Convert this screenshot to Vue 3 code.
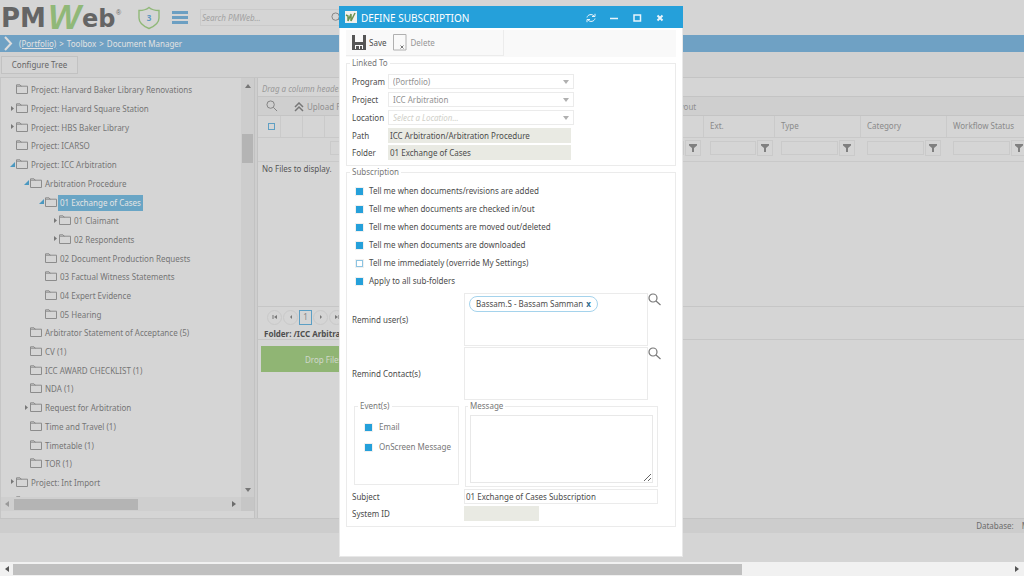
<script setup>
import { ref } from 'vue'

const tree = [
  { level: 0, label: 'Project: Harvard Baker Library Renovations' },
  { level: 0, label: 'Project: Harvard Square Station', state: 'closed' },
  { level: 0, label: 'Project: HBS Baker Library', state: 'closed' },
  { level: 0, label: 'Project: ICARSO' },
  { level: 0, label: 'Project: ICC Arbitration', state: 'open' },
  { level: 1, label: 'Arbitration Procedure', state: 'open' },
  { level: 2, label: '01 Exchange of Cases', state: 'open', selected: true },
  { level: 3, label: '01 Claimant', state: 'closed' },
  { level: 3, label: '02 Respondents', state: 'closed' },
  { level: 2, label: '02 Document Production Requests' },
  { level: 2, label: '03 Factual Witness Statements' },
  { level: 2, label: '04 Expert Evidence' },
  { level: 2, label: '05 Hearing' },
  { level: 1, label: 'Arbitrator Statement of Acceptance (5)' },
  { level: 1, label: 'CV (1)' },
  { level: 1, label: 'ICC AWARD CHECKLIST (1)' },
  { level: 1, label: 'NDA (1)' },
  { level: 1, label: 'Request for Arbitration', state: 'closed' },
  { level: 1, label: 'Time and Travel (1)' },
  { level: 1, label: 'Timetable (1)' },
  { level: 1, label: 'TOR (1)' },
  { level: 0, label: 'Project: Int Import', state: 'closed' },
  { level: 0, label: '' },
]

const columns = ['', 'Ext.', 'Type', 'Category', 'Workflow Status']

const lookups = [
  { id: 'program', label: 'Program', value: '(Portfolio)' },
  { id: 'project', label: 'Project', value: 'ICC Arbitration' },
  { id: 'location', label: 'Location', value: 'Select a Location...', empty: true },
]

const options = ref([
  { label: 'Tell me when documents/revisions are added', on: true },
  { label: 'Tell me when documents are checked in/out', on: true },
  { label: 'Tell me when documents are moved out/deleted', on: true },
  { label: 'Tell me when documents are downloaded', on: true },
  { label: 'Tell me immediately (override My Settings)', on: false },
  { label: 'Apply to all sub-folders', on: true },
])

const events = ref([
  { label: 'Email', on: true },
  { label: 'OnScreen Message', on: true },
])

const path = ref('ICC Arbitration/Arbitration Procedure')
const folder = ref('01 Exchange of Cases')
const subject = ref('01 Exchange of Cases Subscription')
const message = ref('')
</script>

<template>
  <div class="page">
    <header class="top">
      <svg class="logo" viewBox="0 0 122 35" role="img" aria-label="PMWeb">
        <text x="1" y="27" class="logo-dark">PM</text>
        <text x="82" y="27" class="logo-dark logo-end">eb</text>
        <text x="48" y="29" class="logo-green">W</text>
        <text x="116" y="15" class="logo-reg">®</text>
      </svg>
      <svg class="shield" viewBox="0 0 24 24">
        <path d="M12 1.5C9 4 5.500 4.500 2 4.500V12c0 5.500 5 8.500 10 10.500 5-2 10-5 10-10.500V4.500C18.500 4.500 15 4 12 1.500Z" />
        <text x="12" y="15" text-anchor="middle">3</text>
      </svg>
      <button class="burger" aria-label="Menu"><i></i><i></i><i></i></button>
      <div class="search">
        <input type="text" placeholder="Search PMWeb..." aria-label="Search PMWeb" />
        <svg viewBox="0 0 13 13"><circle cx="5" cy="5" r="4" /><path d="M8 8l4 4" /></svg>
      </div>
    </header>

    <nav class="crumbs">
      <svg viewBox="0 0 10 15"><path d="M1 1l6 6.500-6 6.500" /></svg>
      <a href="#">(Portfolio)</a><span>&gt;</span><span>Toolbox</span><span>&gt;</span><span>Document Manager</span>
    </nav>

    <div class="actions"><button>Configure Tree</button></div>

    <main>
      <aside>
        <div class="tree-wrap">
          <div class="tree-view">
            <ul class="tree">
              <li v-for="(n, i) in tree" :key="i" :class="'l' + n.level">
                <span class="toggle">
                  <svg v-if="n.state === 'closed'" viewBox="0 0 5 7"><path fill="#777" d="M1 1v5l3-2.500z" /></svg>
                  <svg v-if="n.state === 'open'" viewBox="0 0 5 7"><path fill="#4b98c0" d="M5 1v5H0z" /></svg>
                </span>
                <svg class="folder" viewBox="0 0 12 10"><path d="M.5 9.500V.8h3.500l1 1.400h6.500v7.300zM.5 2.200h5" /></svg>
                <span class="node" :class="{ selected: n.selected }">{{ n.label }}</span>
              </li>
            </ul>
          </div>
          <div class="vbar">
            <svg viewBox="0 0 6 4"><path d="M0 4l3-4 3 4z" /></svg>
            <div class="vtrack"><div></div></div>
            <svg viewBox="0 0 6 4"><path d="M0 0l3 4 3-4z" /></svg>
          </div>
        </div>
        <div class="hbar">
          <svg class="pale" viewBox="0 0 4 6"><path d="M4 0L0 3l4 3z" /></svg>
          <div class="htrack"><div></div></div>
          <svg viewBox="0 0 4 6"><path d="M0 0l4 3-4 3z" /></svg>
          <span></span>
        </div>
      </aside>
      <div class="splitter"></div>
      <section class="files">
        <div class="drag">Drag a column header</div>
        <div class="file-tools">
          <svg class="find" viewBox="0 0 13 13"><circle cx="5" cy="5" r="4" /><path d="M8 8l4 4" /></svg>
          <button><svg viewBox="0 0 10 10"><path d="M1 5l4-4 4 4M1 9l4-4 4 4" /></svg>Upload Files</button>
          <button class="layout">Layout</button>
        </div>
        <table>
          <colgroup>
            <col class="c-s" /><col class="c-s" /><col class="c-s" /><col /><col class="c-e" /><col class="c-m" /><col class="c-m" /><col class="c-m" />
          </colgroup>
          <thead>
            <tr>
              <th><input type="checkbox" class="tick dim" aria-label="Select all" /></th>
              <th></th><th></th>
              <th v-for="c in columns" :key="c">{{ c }}</th>
            </tr>
          </thead>
          <tbody>
            <tr>
              <td colspan="3"></td>
              <td v-for="c in columns" :key="c">
                <div class="filter" :class="{ tight: c === 'Ext.' || !c, wide: !c }">
                  <input type="text" :aria-label="'Filter ' + c" />
                  <button aria-label="Filter"><svg viewBox="0 0 8 8"><path d="M0 0h8v1.500L5 4v4H3V4L0 1.500z" /></svg></button>
                </div>
              </td>
            </tr>
          </tbody>
        </table>
        <div class="empty">No Files to display.</div>
        <div class="pager">
          <button aria-label="First"><svg viewBox="0 0 6 6"><path d="M.5 1h1v4h-1zM5 1v4L2 3z" /></svg></button>
          <button aria-label="Previous"><svg viewBox="0 0 6 6"><path d="M4 1v4L2 3z" /></svg></button>
          <button class="current">1</button>
          <button aria-label="Next"><svg viewBox="0 0 6 6"><path d="M2 1v4l2-2z" /></svg></button>
          <button aria-label="Last"><svg viewBox="0 0 6 6"><path d="M4.500 1h1v4h-1zM1 1v4l3-2z" /></svg></button>
        </div>
        <div class="folder-line">Folder: /ICC Arbitration</div>
        <div class="drop">Drop Files Here</div>
      </section>
    </main>

    <footer><span>Database:</span><span>M</span></footer>
    <div class="gap"></div>
    <div class="page-bar">
      <svg viewBox="0 0 4 6"><path d="M4 0L0 3l4 3z" /></svg>
      <div class="page-track"><div></div></div>
      <svg viewBox="0 0 4 6"><path d="M0 0l4 3-4 3z" /></svg>
    </div>

    <div class="dialog" role="dialog" aria-label="Define subscription">
      <div class="title">
        <svg class="app" viewBox="0 0 12 12"><path class="app-bg" d="M0 0h12v12H0z" /><path class="app-line" d="M1 4l2 1v5l3-7v7l4-8" /></svg>
        <h1>DEFINE SUBSCRIPTION</h1>
        <button aria-label="Reload"><svg class="thin" viewBox="0 0 10 10"><path d="M1 4.500C1.500 1.500 6 .5 8 3M9 .8V3.500H6M9 5.500C8.500 8.500 4 9.500 2 7M1 9.200V6.500H4" /></svg></button>
        <button aria-label="Minimize"><svg viewBox="0 0 10 10"><path d="M1 5.500h8" /></svg></button>
        <button aria-label="Maximize"><svg viewBox="0 0 10 10"><path d="M2 2h6.500v6H2z" /></svg></button>
        <button aria-label="Close"><svg viewBox="0 0 10 10"><path class="heavy" d="M2.500 2.500l5 5M7.500 2.500l-5 5" /></svg></button>
      </div>

      <div class="body">
        <div class="bar">
          <div class="bar-in">
            <button>
              <svg viewBox="0 0 14 15"><path fill="#555" d="M0 0h3v7h8V0h3v15H0z" /><path fill="#f9f9f9" d="M3 10h8v4H3z" /><path fill="#555" d="M4 11h3v3H4zM8 11h2v3H8z" /></svg>
              Save
            </button>
            <button disabled>
              <svg class="del" viewBox="0 0 14 17"><path d="M.5 .5h12.500v15.500H.5z" /><path class="cross" d="M7.500 11.500l3 3M10.500 11.500l-3 3" /></svg>
              Delete
            </button>
          </div>
        </div>

        <fieldset class="linked">
          <legend>Linked To</legend>
          <div v-for="l in lookups" :key="l.id" class="row">
            <label :for="l.id">{{ l.label }}</label>
            <div class="select" :class="{ hint: l.empty }">
              <select :id="l.id" disabled><option>{{ l.value }}</option></select>
              <svg viewBox="0 0 6 4"><path d="M0 0l3 4 3-4z" /></svg>
            </div>
          </div>
          <div class="row short"><label for="path">Path</label><input id="path" v-model="path" type="text" readonly /></div>
          <div class="row short"><label for="folder">Folder</label><input id="folder" v-model="folder" type="text" readonly /></div>
        </fieldset>

        <fieldset class="sub">
          <legend>Subscription</legend>
          <label v-for="o in options" :key="o.label" class="check">
            <input v-model="o.on" type="checkbox" class="tick" />{{ o.label }}
          </label>

          <div class="remind">
            <span>Remind user(s)</span>
            <div class="tokens">
              <span class="token">Bassam.S - Bassam Samman <button aria-label="Remove Bassam Samman">x</button></span>
            </div>
            <button class="pick" aria-label="Find users"><svg viewBox="0 0 13 13"><circle cx="5" cy="5" r="4" /><path d="M8 8l4.500 4" /></svg></button>
          </div>
          <div class="remind">
            <span>Remind Contact(s)</span>
            <div class="tokens"></div>
            <button class="pick" aria-label="Find contacts"><svg viewBox="0 0 13 13"><circle cx="5" cy="5" r="4" /><path d="M8 8l4.500 4" /></svg></button>
          </div>

          <div class="pair">
            <fieldset class="events">
              <legend>Event(s)</legend>
              <label v-for="e in events" :key="e.label" class="check">
                <input v-model="e.on" type="checkbox" class="tick" />{{ e.label }}
              </label>
            </fieldset>
            <fieldset class="message">
              <legend>Message</legend>
              <textarea v-model="message" aria-label="Message"></textarea>
            </fieldset>
          </div>

          <div class="line"><label for="subject">Subject</label><input id="subject" v-model="subject" type="text" /></div>
          <div class="line"><label for="sysid">System ID</label><input id="sysid" class="sysid" type="text" readonly /></div>
        </fieldset>
      </div>
    </div>
  </div>
</template>

<style>
html, body { margin: 0; background: #d5d5d5; }
</style>

<style scoped>
* { box-sizing: border-box; }
.page {
  position: relative;
  display: flex;
  flex-direction: column;
  height: 100vh;
  min-height: 576px;
  overflow: hidden;
  background: #d5d5d5;
  color: #757575;
  font: 8px/12px "Noto Sans", "Open Sans", sans-serif;
}
button, input, select, textarea { font: inherit; color: inherit; margin: 0; padding: 0; border: 0; background: none; border-radius: 0; outline: 0; min-width: 0; }
svg { display: block; flex: none; }

.top { display: flex; align-items: center; height: 35px; flex: none; }
.logo { width: 122px; height: 35px; }
.logo-dark { font: bold 26px "DejaVu Sans", sans-serif; fill: #656565; }
.logo-end { font-size: 24px; }
.logo-green { font: italic bold 35px "Liberation Sans", sans-serif; fill: #90b878; }
.logo-reg { font: 7px "Liberation Sans", sans-serif; fill: #656565; }
.shield { width: 24px; height: 24px; margin-left: 15px; }
.shield path { fill: none; stroke: #90b878; stroke-width: 1.4; }
.shield text { font: bold 8px "Noto Sans", sans-serif; fill: #5c98c2; }
.burger { display: flex; flex-direction: column; gap: 2px; width: 16px; margin-left: 11px; }
.burger i { height: 3px; background: #6c9fc2; }
.search { display: flex; align-items: center; width: 148px; height: 17px; margin-left: 12px; border: 1px solid #cacaca; }
.search input { flex: 1; padding-left: 1px; }
.search input::placeholder { color: #a2a2a2; font-style: italic; opacity: 1; }
.search svg { width: 12px; height: 12px; margin-right: 4px; fill: none; stroke: #808080; }

.crumbs { display: flex; align-items: center; gap: 3px; height: 17px; flex: none; background: #6fa1c4; color: #e2e2e2; }
.crumbs svg { width: 10px; height: 15px; margin: 0 2px 0 4px; fill: none; stroke: #dcdcdc; stroke-width: 2; }
.crumbs a { color: inherit; }

.actions { height: 26px; flex: none; padding: 4px 1px; background: #d1d1d1; border-bottom: 1px solid #c4c4c4; }
.actions button { width: 77px; height: 18px; border: 1px solid #c2c2c2; color: #666; background: #d4d4d4; }

main { display: flex; flex: 1; min-height: 0; }
aside { display: flex; flex-direction: column; width: 254px; flex: none; border-left: 1px solid #c6c6c6; padding-bottom: 7px; }
.tree-wrap { display: flex; flex: 1; min-height: 0; }
.tree-view { flex: 1; overflow: hidden; }
.tree { display: grid; grid-auto-rows: 1fr; height: 433px; margin: 0; padding: 3px 0 0 9px; list-style: none; }
.tree li { display: flex; align-items: center; white-space: nowrap; }
.l1 { padding-left: 14px; }
.l2 { padding-left: 29px; }
.l3 { padding-left: 43px; }
.toggle { width: 6px; height: 9px; }
.toggle svg { width: 5px; height: 7px; }
.folder { width: 12px; height: 10px; margin-bottom: 2px; fill: none; stroke: #8c8c8c; }
.node { padding: 0 2px; margin-left: 1px; line-height: 16px; }
.selected { background: #69a5c5; color: #e4e4e4; }
.vbar { display: flex; flex-direction: column; align-items: center; width: 13px; padding: 6px 0 5px; background: #cdcdcd; }
.vbar svg { width: 6px; height: 4px; fill: #777; }
.vtrack { flex: 1; align-self: stretch; padding: 46px 1px 0; }
.vtrack div { height: 29px; background: #b4b4b4; }
.hbar { display: flex; align-items: center; height: 14px; flex: none; padding-left: 4px; background: #cfcfcf; }
.hbar svg { width: 4px; height: 6px; fill: #6c6c6c; }
.hbar .pale { fill: #999; }
.hbar span { width: 13px; height: 14px; margin-left: 5px; background: #c6c6c6; }
.htrack { flex: 1; padding-left: 5px; }
.htrack div { width: 57%; height: 11px; background: #b4b4b4; }
.splitter { width: 4px; flex: none; background: #cecece; border: solid #c2c2c2; border-width: 0 1px; }

.files { flex: 1; min-width: 0; overflow: hidden; white-space: nowrap; }
.drag { height: 19px; padding: 5px 4px 0; font-style: italic; color: #999; border-bottom: 1px solid #c4c4c4; }
.file-tools { display: flex; align-items: center; height: 19px; padding-left: 8px; color: #909090; background: #cfcfcf; border-bottom: 1px solid #c4c4c4; }
.find { width: 12px; height: 12px; margin-right: 16px; fill: none; stroke: #7e7e7e; }
.file-tools button { display: flex; align-items: center; gap: 3px; padding-top: 2px; }
.file-tools button svg { width: 10px; height: 10px; fill: none; stroke: #777; stroke-width: 1.500; }
.file-tools .layout { margin-left: 318px; }
table { width: calc(100% + 9px); table-layout: fixed; border-collapse: collapse; }
.c-s { width: 22px; }
.c-e { width: 71px; }
.c-m { width: 86px; }
th { height: 21px; padding: 0 0 0 6px; border-right: 1px solid #cacaca; border-bottom: 1px solid #c9c9c9; font-weight: normal; text-align: left; color: #8a8a8a; }
th:first-child { padding-left: 10px; }
td { height: 24px; padding: 0; border-bottom: 1px solid #c9c9c9; }
.filter { display: flex; align-items: center; gap: 1px; padding: 0 6px 2px; }
.filter.tight { padding-right: 2px; }
.filter.wide { padding-right: 3px; }
.filter input { flex: 1; height: 14px; border: 1px solid #cacaca; }
.filter button { display: flex; align-items: center; justify-content: center; width: 16px; height: 16px; border: 1px solid #cacaca; }
.filter svg { width: 8px; height: 8px; fill: #808080; }
.empty { height: 144px; padding: 1px 4px; color: #555; }
.pager { display: flex; align-items: center; gap: 1px; height: 22px; padding-left: 9px; border-top: 1px solid #c6c6c6; }
.pager button { display: flex; align-items: center; justify-content: center; width: 15px; height: 15px; border: 1px solid #c9c9c9; border-radius: 50%; }
.pager button.current { width: 13px; border-color: #5c9fc4; border-radius: 0; color: #888; }
.pager svg { width: 6px; height: 6px; fill: #777; }
.folder-line { height: 12px; padding-left: 6px; font-weight: bold; color: #4e4e4e; border-bottom: 1px solid #c6c6c6; }
.drop { width: 45%; height: 26px; margin: 6px 3px 0; padding-left: 44px; line-height: 27px; background: #90b574; color: #d0d8cc; }

footer { display: flex; justify-content: flex-end; gap: 8px; height: 15px; flex: none; padding-top: 1px; margin-right: -5px; background: #cdcdcd; border-top: 1px solid #c4c4c4; color: #6c6c6c; }
.gap { height: 29px; flex: none; }
.page-bar { display: flex; align-items: center; height: 14px; flex: none; padding: 0 5px; background: #f1f1f1; }
.page-bar svg { width: 4px; height: 6px; fill: #555; }
.page-track { flex: 1; padding: 0 4px; }
.page-track div { width: 73%; height: 11px; background: #c0c0c0; }

.dialog {
  position: absolute;
  top: 6px;
  left: 50%;
  width: 344px;
  margin-left: -173px;
  min-height: 551px;
  background: #fff;
  color: #4c4c4c;
  border: 1px solid #e8e8e8;
  border-top-color: #25a0da;
}
.title { display: flex; align-items: center; height: 22px; margin: -1px -1px 0; padding: 0 15px 0 6px; background: #25a0da; color: #fff; }
.app { width: 12px; height: 12px; }
.app-bg { fill: #f1f1ee; }
.app-line { fill: none; stroke: #6d9350; stroke-width: 1.500; }
.title h1 { flex: 1; margin: 2px 0 0 4px; font-size: 10px; font-weight: normal; }
.title button { width: 15px; height: 15px; margin: 2px 0 0 8px; padding: 2px; }
.title button svg { width: 10px; height: 10px; fill: none; stroke: #e8f4fb; stroke-width: 1.500; }
.title button .thin { stroke-width: 1; }
.title .heavy { stroke-width: 2; }
.body { padding: 2px 6px 0; }
.bar { height: 27px; background: #f9f9f9; margin-bottom: 1px; }
.bar-in { display: flex; align-items: center; gap: 7px; width: 48%; height: 26px; padding-left: 6px; border: solid #ececec; border-width: 0 1px 1px 0; }
.bar button { display: flex; align-items: center; gap: 3px; }
.bar button:disabled { color: #969696; }
.bar svg { width: 14px; height: 15px; }
.bar .del { height: 17px; fill: none; stroke: #b0b0b0; }
.bar .cross { stroke: #777; }

fieldset { margin: 0; padding: 0; border: 1px solid #ebebeb; min-width: 0; }
legend { height: 10px; margin-left: -2px; padding: 0 2px; line-height: 10px; color: #777; }
.linked { padding: 6px 5px 5px; margin-bottom: 1px; }
.row { display: flex; align-items: center; height: 15px; margin-bottom: 3px; }
.row.short { margin-bottom: 2px; }
.row.short:last-child { margin-bottom: 0; }
.row label { width: 36px; flex: none; }
.row > input { width: 183px; height: 15px; padding-left: 2px; background: #e9eae3; }
.select { display: flex; align-items: center; width: 186px; height: 15px; border: 1px solid #ebebeb; color: #929292; }
.select select { flex: 1; height: 13px; padding-left: 4px; appearance: none; opacity: 1; color: inherit; }
.select svg { width: 6px; height: 4px; margin-right: 4px; fill: #b0b0b0; }
.hint { color: #cfcfc8; font-style: italic; }

.sub { padding: 5px 5px 5px; }
.check { display: flex; align-items: center; gap: 6px; height: 18px; padding-left: 4px; }
.tick { appearance: none; width: 7px; height: 7px; border: 1px solid #8cc4e2; background: #fff; box-shadow: 0 0 0 1px #f0f0f0; }
.tick:checked { background: #25a0da; border-color: #25a0da; }
.tick.dim { display: block; background: #d5d5d5; border-color: #5f9fc3; box-shadow: none; }
.remind { display: grid; grid-template-columns: 112px 184px 13px; align-items: center; height: 53px; margin-bottom: 1px; }
.sub .check + .remind { margin-top: 3px; }
.tokens { align-self: stretch; padding: 2px 4px; border: 1px solid #ebebeb; }
.token { display: inline-flex; align-items: center; gap: 3px; height: 16px; padding: 0 6px; border: 1px solid #a5d3ec; border-radius: 8px; white-space: nowrap; }
.token button { font-weight: bold; color: #2f6d90; }
.pick { align-self: start; }
.pick svg { width: 13px; height: 13px; fill: none; stroke: #777; stroke-width: 1.200; }
.pair { display: flex; gap: 6px; align-items: flex-start; margin-top: 1px; padding-left: 2px; }
.events { width: 105px; height: 84px; padding: 6px 0 0 5px; color: #777; }
.events .check { gap: 7px; height: 20px; white-space: nowrap; padding-left: 5px; }
.message { width: 193px; height: 86px; padding: 4px; }
.message textarea { display: block; width: 100%; height: 68px; border: 1px solid #e8e8e8; resize: vertical; }
.line { display: grid; grid-template-columns: 112px 194px; align-items: center; margin-top: 2px; }
.line input { height: 15px; padding-left: 1px; border: 1px solid #ebebeb; }
.line .sysid { width: 75px; background: #e9eae3; border-color: #e9eae3; }
</style>
